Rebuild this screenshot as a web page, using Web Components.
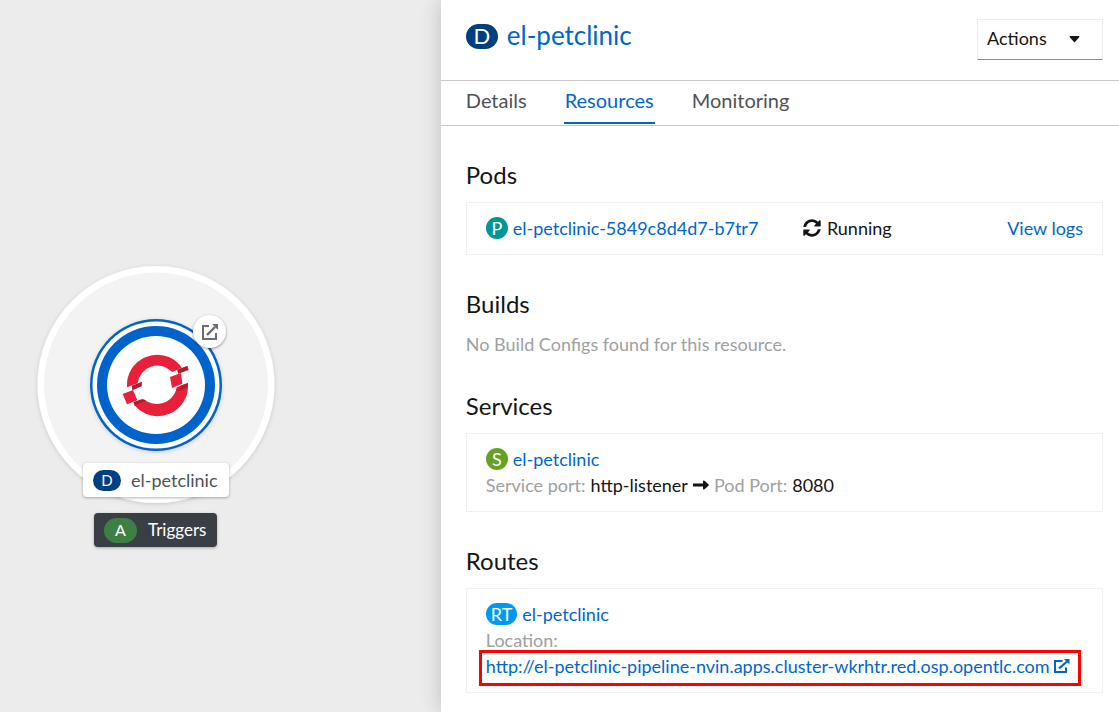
<!DOCTYPE html>
<html lang="en">
<head>
<meta charset="utf-8">
<title>el-petclinic · Topology</title>
<style>
  html, body { margin: 0; min-height: 100%; }
  body {
    --link: #0066cc;
    --text: #151515;
    --muted: #a0a0a0;
    --line: #c7c7c7;
    --card-line: #f0f0f0;
    --deployment: #004080;
    --body: 18px;
    font-family: Lato, "Open Sans", sans-serif;
    font-size: var(--body);
    font-weight: 400;
    line-height: 26px;
    color: var(--text);
    background: #ececec;
  }
</style>
</head>
<body>
<topology-page>
  <topology-canvas slot="canvas"></topology-canvas>
  <side-panel slot="panel">
    <panel-header slot="header" kind="D" name="el-petclinic"></panel-header>
    <panel-tabs slot="tabs"></panel-tabs>

    <resource-section heading="Pods">
      <resource-card>
        <pod-row name="el-petclinic-5849c8d4d7-b7tr7"></pod-row>
      </resource-card>
    </resource-section>

    <resource-section heading="Builds">
      <muted-text>No Build Configs found for this resource.</muted-text>
    </resource-section>

    <resource-section heading="Services">
      <resource-card>
        <resource-link kind="S" color="#64a226" name="el-petclinic"></resource-link>
        <port-mapping service="http-listener" pod="8080"></port-mapping>
      </resource-card>
    </resource-section>

    <resource-section heading="Routes">
      <resource-card>
        <resource-link kind="RT" color="#0099f0" name="el-petclinic"></resource-link>
        <muted-text>Location:</muted-text>
        <route-location url="http://el-petclinic-pipeline-nvin.apps.cluster-wkrhtr.red.osp.opentlc.com"></route-location>
      </resource-card>
    </resource-section>
  </side-panel>
</topology-page>

<script>
class BaseElement extends HTMLElement {
  connectedCallback() {
    if (this.shadowRoot) return;
    this.attachShadow({ mode: 'open' }).innerHTML =
      `<style>*{box-sizing:border-box} a{color:var(--link);text-decoration:none}${this.styles()}</style>${this.markup()}`;
  }
  attr(name) { return this.getAttribute(name) || ''; }
}

customElements.define('topology-page', class extends BaseElement {
  styles() { return `
    :host { display: grid; grid-template-columns: minmax(0, 13fr) minmax(0, 20fr); min-height: 100vh; }
    ::slotted(*) { min-width: 0; }`; }
  markup() { return `<slot name="canvas"></slot><slot name="panel"></slot>`; }
});

customElements.define('kind-badge', class extends BaseElement {
  styles() { return `
    :host { display: inline-flex; flex: none; align-items: center; justify-content: center;
      box-sizing: border-box; min-width: 22px; height: 22px; padding: 0 5px; border-radius: 11px;
      background: var(--badge, var(--deployment)); color: #fff; }
    :host([size="large"]) { min-width: 32px; height: 25px; border-radius: 13px; font-size: 22px; }
    :host([size="node"]) { min-width: 28px; height: 21px; font-size: 15px; }
    :host([size="group"]) { min-width: 33px; height: 25px; border-radius: 13px; font-size: 16px; }`; }
  markup() { return `<slot></slot>`; }
});

/* Free canvas: the node, its decorator and its labels are placed by position. */
customElements.define('topology-canvas', class extends BaseElement {
  styles() { return `
    :host { display: block; position: relative; overflow: hidden; background: #ececec; }
    .node { position: absolute; left: 26px; top: 255px; }
    svg { display: block; }
    .decorator { position: absolute; left: 193px; top: 315px; width: 33px; height: 33px; border-radius: 50%;
      background: #fff; box-shadow: 0 1px 3px rgba(3,3,3,.4); display: flex; align-items: center; justify-content: center; }
    .label { position: absolute; display: flex; align-items: center; height: 34px; border-radius: 4px;
      font-size: 18px; white-space: nowrap; box-shadow: 0 1px 3px rgba(3,3,3,.3); }
    .name { left: 83px; top: 463px; width: 146px; padding: 0 10px; gap: 10px; background: #fff; color: #4d5258; }
    .group { left: 94px; top: 513px; width: 123px; padding: 0 10px; gap: 11px; background: #393f44; color: #fff; font-size: 17px; }
    .group kind-badge { --badge: #3e8044; }`; }
  markup() { return `
    <svg class="node" width="260" height="260" viewBox="0 0 260 260" aria-hidden="true">
      <defs>
        <filter id="soft" x="-10%" y="-10%" width="120%" height="120%">
          <feDropShadow dx="0" dy="1" stdDeviation="2" flood-color="#030303" flood-opacity=".16"/>
        </filter>
      </defs>
      <circle cx="130" cy="129.500" r="118.500" fill="#fff" filter="url(#soft)"/>
      <circle cx="130" cy="129.500" r="112" fill="#f3f3f3"/>
      <circle cx="130" cy="130" r="66" fill="#0063cc" filter="url(#soft)"/>
      <circle cx="130" cy="130" r="63.500" fill="#fff"/>
      <circle cx="130" cy="130" r="59" fill="#0063cc"/>
      <circle cx="130" cy="130" r="49" fill="#fff"/>
      <g transform="translate(59 55) scale(.33333)">
        <path fill="#e8203a" d="M126 232A91 91 0 0 1 284 164L290 173L275 180L262 186A60 60 0 0 0 158 220Z"/>
        <path fill="#e8203a" d="M255 201L288 189L292 221L261 234Z"/>
        <path fill="#e8203a" d="M309 219A91 91 0 0 1 148 285L180 270A60 60 0 0 0 275 232Z"/>
        <path fill="#e8203a" d="M113 252L144 240L157 271L126 283Z"/>
        <path fill="#b01c2e" d="M276 179L307 167L311 180L280 191Z"/>
        <path fill="#b01c2e" d="M290 226L309 219L306 233L274 244Z"/>
        <path fill="#b01c2e" d="M140 227L171 215L170 229L142 241Z"/>
        <path fill="#b01c2e" d="M145 276L172 267L183 271L149 287Z"/>
      </g>
    </svg>
    <a class="decorator" href="#" aria-label="Open URL">
      <svg width="16" height="16" viewBox="0 0 16 16" aria-hidden="true">
        <path d="M7 2H1V15H14V9" fill="none" stroke="#6a6e73" stroke-width="2"/>
        <path d="M5 11L13 3" fill="none" stroke="#6a6e73" stroke-width="2.4"/>
        <path d="M10 0H16V6Z" fill="#6a6e73"/>
      </svg>
    </a>
    <div class="label name"><kind-badge size="node">D</kind-badge><span>el-petclinic</span></div>
    <div class="label group"><kind-badge size="group">A</kind-badge><span>Triggers</span></div>`; }
});

customElements.define('side-panel', class extends BaseElement {
  styles() { return `
    :host { display: flex; flex-direction: column; position: relative; background: #fff; box-shadow: 0 0 20px rgba(3,3,3,.2); }
    .content { display: flex; flex-direction: column; gap: 36px; padding: 36px 16px 16px 25px; }`; }
  markup() { return `<slot name="header"></slot><slot name="tabs"></slot><div class="content"><slot></slot></div>`; }
});

customElements.define('panel-header', class extends BaseElement {
  styles() { return `
    :host { display: flex; justify-content: space-between; align-items: flex-start; padding: 19px 16px 20px 25px;
      border-bottom: 1px solid var(--line); }
    h1 { display: flex; align-items: center; gap: 9px; margin: 0; font-size: 26px; font-weight: 400; line-height: 34px; }
    a { line-height: 32px; padding-bottom: 2px; }`; }
  markup() { return `
    <h1><kind-badge size="large">${this.attr('kind')}</kind-badge><a href="#">${this.attr('name')}</a></h1>
    <actions-menu></actions-menu>`; }
});

customElements.define('actions-menu', class extends BaseElement {
  styles() { return `
    :host { display: block; }
    button { display: flex; align-items: center; justify-content: space-between; width: 126px; height: 41px;
      padding: 0 22px 0 9px; margin: 0;
      border: 1px solid #ededed; border-bottom-color: #8a8d90; background: #fff; color: var(--text);
      font: inherit; }
    span { padding-bottom: 3px; }
    svg { display: block; }`; }
  markup() { return `<button type="button" aria-haspopup="true"><span>Actions</span>
    <svg width="11" height="7" viewBox="0 0 11 7" aria-hidden="true"><path d="M1 0H10Q11 .5 10 1.5L6 6Q5.500 6.500 5 6L1 1.500Q0 .5 1 0Z" fill="#151515"/></svg></button>`; }
});

customElements.define('panel-tabs', class extends BaseElement {
  styles() { return `
    :host { display: block; border-bottom: 1px solid var(--line); }
    nav { display: flex; gap: 36px; height: 44px; padding: 0 24px; font-size: 20px; }
    a { height: 43px; padding: 0 1px; line-height: 38px; color: #4f5255; border-bottom: 2px solid transparent; }
    a[aria-current] { color: var(--link); border-color: var(--link); }`; }
  markup() { return `<nav><a href="#">Details</a><a href="#" aria-current="page">Resources</a><a href="#">Monitoring</a></nav>`; }
});

customElements.define('resource-section', class extends BaseElement {
  styles() { return `
    :host { display: block; }
    h2 { margin: 0 0 14px; font-size: 24px; font-weight: 400; line-height: 26px; }`; }
  markup() { return `<h2>${this.attr('heading')}</h2><slot></slot>`; }
});

customElements.define('resource-card', class extends BaseElement {
  styles() { return `:host { display: block; padding: 12px 19px 13px; border: 1px solid var(--card-line); }`; }
  markup() { return `<slot></slot>`; }
});

customElements.define('muted-text', class extends BaseElement {
  styles() { return `:host { display: block; color: var(--muted); }`; }
  markup() { return `<slot></slot>`; }
});

customElements.define('resource-link', class extends BaseElement {
  styles() { return `
    :host { display: flex; align-items: center; gap: 5px; }
    kind-badge { --badge: ${this.attr('color')}; }`; }
  markup() { return `<kind-badge>${this.attr('kind')}</kind-badge><a href="#">${this.attr('name')}</a>`; }
});

customElements.define('pod-row', class extends BaseElement {
  styles() { return `
    :host { display: grid; grid-template-columns: minmax(0, 317fr) minmax(0, 280fr); align-items: center; }
    .rest, .status { display: flex; align-items: center; }
    .rest { justify-content: space-between; }
    .status { gap: 6px; }`; }
  markup() { return `
    <resource-link kind="P" color="#009596" name="${this.attr('name')}"></resource-link>
    <div class="rest">
      <span class="status">
        <svg width="18" height="18" viewBox="0 0 512 512" aria-hidden="true"><path fill="#151515" d="M371 133c-32-30-73-46-116-46-78 0-145 53-163 127-2 6-7 10-12 10H23c-8 0-13-7-12-14C33 94 135 8 256 8c66 0 127 26 171 69l36-36c15-15 41-4 41 17v134c0 13-11 24-24 24H346c-21 0-32-26-17-41zM32 296h134c21 0 32 26 17 41l-42 42c32 30 73 46 116 46 78 0 145-53 163-127 2-6 7-10 12-10h57c8 0 13 7 12 14-22 116-124 202-245 202-66 0-127-26-171-69l-36 36c-15 15-41 4-41-17V320c0-13 11-24 24-24z"/></svg>
        <span>Running</span>
      </span>
      <a href="#">View logs</a>
    </div>`; }
});

customElements.define('port-mapping', class extends BaseElement {
  styles() { return `
    :host { display: flex; align-items: center; gap: 5px; }
    .key { color: var(--muted); }`; }
  markup() { return `
    <span class="key">Service port:</span><span>${this.attr('service')}</span>
    <svg width="16" height="10" viewBox="0 0 16 10" aria-hidden="true"><path fill="#151515" d="M0 3.500H10V1Q10.500 0 11.500 .7L15.500 4.300Q16 5 15.500 5.700L11.500 9.300Q10.500 10 10 9V6.500H0Z"/></svg>
    <span class="key">Pod Port:</span><span>${this.attr('pod')}</span>`; }
});

/* The location link carries a red highlight frame that overlaps the card padding. */
customElements.define('route-location', class extends BaseElement {
  styles() { return `
    :host { display: block; position: relative; }
    a { display: inline-flex; align-items: center; gap: 4px; max-width: 100%; }
    .frame { position: absolute; inset: -3px 2px -7px -7px; border: 3px solid #fe0000; pointer-events: none; }`; }
  markup() { return `
    <a href="${this.attr('url')}"><span>${this.attr('url')}</span>
      <svg width="16" height="14" viewBox="0 0 16 14" aria-hidden="true">
        <path d="M8.500 2H1V13H12V8.500" fill="none" stroke="#0066cc" stroke-width="2"/>
        <path d="M5 9.500L13 2.500" fill="none" stroke="#0066cc" stroke-width="2.200"/>
        <path d="M10 0H15.500V5.500Z" fill="#0066cc"/>
      </svg></a>
    <span class="frame"></span>`; }
});
</script>
</body>
</html>
